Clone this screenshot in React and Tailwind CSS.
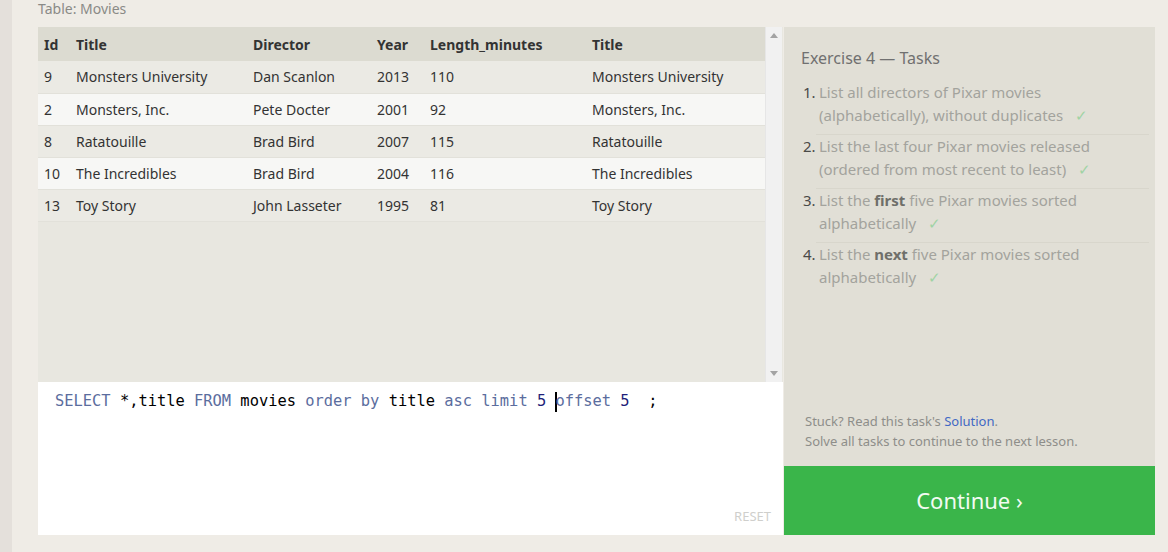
import React from 'react';

const rows = [
  { id: 9, title: 'Monsters University', director: 'Dan Scanlon', year: 2013, length: 110 },
  { id: 2, title: 'Monsters, Inc.', director: 'Pete Docter', year: 2001, length: 92 },
  { id: 8, title: 'Ratatouille', director: 'Brad Bird', year: 2007, length: 115 },
  { id: 10, title: 'The Incredibles', director: 'Brad Bird', year: 2004, length: 116 },
  { id: 13, title: 'Toy Story', director: 'John Lasseter', year: 1995, length: 81 },
];

const tasks = [
  { text: ['List all directors of Pixar movies', '(alphabetically), without duplicates'] },
  { text: ['List the last four Pixar movies released', '(ordered from most recent to least)'] },
  { text: [<>List the <b className="font-bold text-[#6f6f6a]">first</b> five Pixar movies sorted</>, 'alphabetically'] },
  { text: [<>List the <b className="font-bold text-[#6f6f6a]">next</b> five Pixar movies sorted</>, 'alphabetically'] },
];

const Check = () => <span className="ml-[12px] text-[#9fd3a4]">✓</span>;

const App = () => {
  return (
    <div className="flex h-[552px] w-[1168px] overflow-hidden bg-[#efece6] font-['Noto_Sans',sans-serif]">
      <div className="w-[12px] shrink-0 bg-[#e4e0db]" />
      <div className="flex flex-col pl-[26px]">
        <div className="h-[27px] pt-[1px] text-[14px] leading-[16px] text-[#8a8a86]">Table: Movies</div>
        <div className="flex">
          <div className="flex w-[745px] flex-col">
            <div className="flex h-[355px] bg-[#e8e7e0]">
              <table className="w-[727px] table-fixed border-collapse self-start text-[14px] text-[#333]">
                <colgroup>
                  <col className="w-[32px]" />
                  <col className="w-[177px]" />
                  <col className="w-[124px]" />
                  <col className="w-[53px]" />
                  <col className="w-[162px]" />
                  <col className="w-[179px]" />
                </colgroup>
                <thead>
                  <tr className="h-[34px] bg-[#dcdbd1] text-left font-bold">
                    <th className="pl-[6px]">Id</th>
                    <th className="pl-[6px]">Title</th>
                    <th className="pl-[6px]">Director</th>
                    <th className="pl-[6px]">Year</th>
                    <th className="pl-[6px]">Length_minutes</th>
                    <th className="pl-[6px]">Title</th>
                  </tr>
                </thead>
                <tbody>
                  {rows.map((r, i) => (
                    <tr key={r.id} className={`h-[32px] border-b border-[#e2e1da] ${i % 2 === 1 ? 'bg-[#f7f7f5]' : 'bg-[#ebeae4]'}`}>
                      <td className="pl-[6px]">{r.id}</td>
                      <td className="pl-[6px]">{r.title}</td>
                      <td className="pl-[6px]">{r.director}</td>
                      <td className="pl-[6px]">{r.year}</td>
                      <td className="pl-[6px]">{r.length}</td>
                      <td className="pl-[6px]">{r.title}</td>
                    </tr>
                  ))}
                </tbody>
              </table>
              <div className="flex w-[17px] flex-col items-center justify-between border-l border-[#e6e6e6] bg-[#f1f1f1] py-[6px]">
                <svg width="8" height="5" viewBox="0 0 8 5"><path d="M0 5 L4 0 L8 5 Z" fill="#a3a3a3" /></svg>
                <svg width="8" height="5" viewBox="0 0 8 5"><path d="M0 0 L4 5 L8 0 Z" fill="#a3a3a3" /></svg>
              </div>
            </div>
            <div className="relative h-[153px] bg-white px-[17px] pt-[8px] font-['DejaVu_Sans_Mono',monospace] text-[15.4px] leading-[22px] whitespace-pre">
              <span className="text-[#5b6d9e]">SELECT</span>
              <span className="text-black"> *,title </span>
              <span className="text-[#5b6d9e]">FROM</span>
              <span className="text-black"> movies </span>
              <span className="text-[#5b6d9e]">order by</span>
              <span className="text-black"> title </span>
              <span className="text-[#5b6d9e]">asc limit</span>
              <span className="text-[#1f1f7a]"> 5 </span>
              <span className="inline-block h-[20px] w-[2px] -mr-[2px] align-middle bg-black" />
              <span className="text-[#5b6d9e]">offset</span>
              <span className="text-[#1f1f7a]"> 5</span>
              <span className="text-black">  ;</span>
              <div className="absolute right-[12px] bottom-[8px] font-['Noto_Sans',sans-serif] text-[13px] text-[#cfcfcc]">RESET</div>
            </div>
          </div>
          <div className="ml-[1px] flex w-[371px] flex-col">
            <div className="flex h-[439px] flex-col justify-between bg-[#e1dfd6] pl-[17px] pr-[6px]">
              <div className="pt-[19px]">
                <div className="text-[16px] leading-[24px] text-[#707070]">Exercise 4 — Tasks</div>
                <ol className="mt-[10px] text-[15px] leading-[22.5px] text-[#a3a39d]">
                  {tasks.map((t, i) => (
                    <li key={i} className={`flex pb-[8px] pt-[1px] ${i < 3 ? 'ml-[15px] border-b border-[#d8d6cc] -mb-[1px]' : 'ml-[15px]'}`}>
                      <span className="-ml-[13px] w-[16px] shrink-0 text-[#4a4a48]">{i + 1}.</span>
                      <div>
                        <div>{t.text[0]}</div>
                        <div>{t.text[1]}<Check /></div>
                      </div>
                    </li>
                  ))}
                </ol>
              </div>
              <div className="pb-[15px] pl-[4px] text-[13px] leading-[20px] text-[#8e8e8a]">
                <div>Stuck? Read this task's <span className="text-[#4169c4]">Solution</span>.</div>
                <div>Solve all tasks to continue to the next lesson.</div>
              </div>
            </div>
            <div className="flex h-[69px] items-center justify-center bg-[#3ab54a] text-[22px] text-[#f2fbf2]">
              Continue ›
            </div>
          </div>
        </div>
      </div>
    </div>
  );
};

export default App;
